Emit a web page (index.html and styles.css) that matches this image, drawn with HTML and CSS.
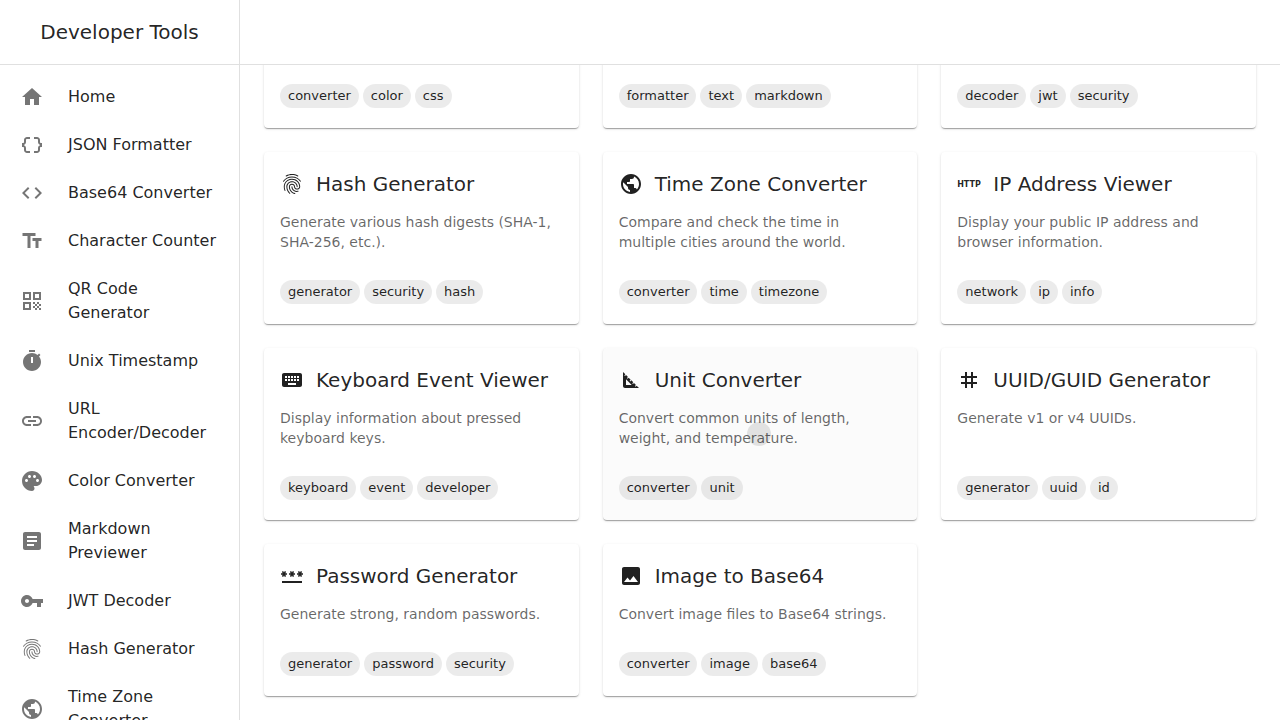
FILE: index.html
```html
<!DOCTYPE html>
<html lang="en">
<head>
<meta charset="utf-8">
<meta name="viewport" content="width=device-width, initial-scale=1">
<title>Developer Tools</title>
<link rel="stylesheet" href="styles.css">
</head>
<body>
<svg class="sprite" aria-hidden="true">
  <symbol id="home" viewBox="0 0 24 24"><path d="M10 20v-6h4v6h5v-8h3L12 3 2 12h3v8z"/></symbol>
  <symbol id="braces" viewBox="0 0 24 24"><path d="M4 7v2c0 .55-.45 1-1 1H2v4h1c.55 0 1 .45 1 1v2c0 1.65 1.35 3 3 3h3v-2H7c-.55 0-1-.45-1-1v-2c0-1.3-.84-2.42-2-2.83v-.34C5.16 11.42 6 10.3 6 9V7c0-.55.45-1 1-1h3V4H7C5.35 4 4 5.35 4 7zm17 3c-.55 0-1-.45-1-1V7c0-1.65-1.35-3-3-3h-3v2h3c.55 0 1 .45 1 1v2c0 1.3.84 2.42 2 2.83v.34c-1.16.41-2 1.52-2 2.83v2c0 .55-.45 1-1 1h-3v2h3c1.65 0 3-1.35 3-3v-2c0-.55.45-1 1-1h1v-4h-1z"/></symbol>
  <symbol id="code" viewBox="0 0 24 24"><path d="M9.4 16.6 4.8 12l4.6-4.6L8 6l-6 6 6 6 1.4-1.4zm5.2 0 4.6-4.6-4.6-4.6L16 6l6 6-6 6-1.4-1.4z"/></symbol>
  <symbol id="text-size" viewBox="0 0 24 24"><path d="M2.5 4v3h5v12h3V7h5V4h-13zm19 5h-9v3h3v7h3v-7h3V9z"/></symbol>
  <symbol id="qr" viewBox="0 0 24 24"><path d="M3 11h8V3H3v8zm2-6h4v4H5V5zM3 21h8v-8H3v8zm2-6h4v4H5v-4zM13 3v8h8V3h-8zm6 6h-4V5h4v4zM19 19h2v2h-2zM13 13h2v2h-2zM15 15h2v2h-2zM13 17h2v2h-2zM15 19h2v2h-2zM17 17h2v2h-2zM17 13h2v2h-2zM19 15h2v2h-2z"/></symbol>
  <symbol id="timer" viewBox="0 0 24 24"><path d="M9 1h6v2H9zm10.03 6.39 1.42-1.42c-.43-.51-.9-.99-1.41-1.41l-1.42 1.42C16.07 4.74 14.12 4 12 4c-4.97 0-9 4.03-9 9s4.02 9 9 9 9-4.03 9-9c0-2.12-.74-4.07-1.97-5.61zM13 14h-2V8h2v6z"/></symbol>
  <symbol id="link" viewBox="0 0 24 24"><path d="M3.9 12c0-1.71 1.39-3.1 3.1-3.1h4V7H7c-2.76 0-5 2.24-5 5s2.24 5 5 5h4v-1.9H7c-1.71 0-3.1-1.39-3.1-3.1zM8 13h8v-2H8v2zm9-6h-4v1.9h4c1.71 0 3.1 1.39 3.1 3.1s-1.39 3.1-3.1 3.1h-4V17h4c2.76 0 5-2.24 5-5s-2.24-5-5-5z"/></symbol>
  <symbol id="palette" viewBox="0 0 24 24"><path d="M12 2C6.49 2 2 6.49 2 12s4.49 10 10 10c1.38 0 2.5-1.12 2.5-2.5 0-.61-.23-1.2-.64-1.67-.08-.1-.13-.21-.13-.33 0-.28.22-.5.5-.5H16c3.31 0 6-2.69 6-6 0-4.96-4.49-9-10-9zm5.5 11c-.83 0-1.5-.67-1.5-1.5s.67-1.5 1.5-1.5 1.5.67 1.5 1.5-.67 1.5-1.5 1.5zm-3-4c-.83 0-1.5-.67-1.5-1.5S13.67 6 14.5 6s1.5.67 1.5 1.5S15.33 9 14.5 9zM5 11.5c0-.83.67-1.5 1.5-1.5s1.5.67 1.5 1.5S7.33 13 6.5 13 5 12.33 5 11.5zm6-4c0 .83-.67 1.5-1.5 1.5S8 8.33 8 7.5 8.67 6 9.5 6s1.5.67 1.5 1.5z"/></symbol>
  <symbol id="article" viewBox="0 0 24 24"><path d="M19 3H5c-1.1 0-2 .9-2 2v14c0 1.1.9 2 2 2h14c1.1 0 2-.9 2-2V5c0-1.1-.9-2-2-2zm-5 14H7v-2h7v2zm3-4H7v-2h10v2zm0-4H7V7h10v2z"/></symbol>
  <symbol id="key" viewBox="0 0 24 24"><path d="M12.65 10C11.83 7.67 9.61 6 7 6c-3.31 0-6 2.69-6 6s2.69 6 6 6c2.61 0 4.83-1.67 5.65-4H17v4h4v-4h2v-4H12.65zM7 14c-1.1 0-2-.9-2-2s.9-2 2-2 2 .9 2 2-.9 2-2 2z"/></symbol>
  <symbol id="fingerprint" viewBox="0 0 24 24"><path d="M17.81 4.47c-.08 0-.16-.02-.23-.06C15.66 3.42 14 3 12.01 3c-1.98 0-3.86.47-5.57 1.41-.24.13-.54.04-.68-.2-.13-.24-.04-.55.2-.68C7.82 2.52 9.86 2 12.01 2c2.13 0 3.99.47 6.03 1.52.25.13.34.43.21.67-.09.18-.26.28-.44.28zM3.5 9.72c-.1 0-.2-.03-.29-.09-.23-.16-.28-.47-.12-.7.99-1.4 2.25-2.5 3.75-3.27C9.98 4.04 14 4.03 17.15 5.65c1.5.77 2.76 1.86 3.75 3.25.16.22.11.54-.12.7-.23.16-.54.11-.7-.12-.9-1.26-2.04-2.25-3.39-2.94-2.87-1.47-6.54-1.47-9.4.01-1.36.7-2.5 1.7-3.4 2.96-.08.14-.23.21-.39.21zm6.25 12.07c-.13 0-.26-.05-.35-.15-.87-.87-1.34-1.43-2.01-2.64-.69-1.23-1.05-2.73-1.05-4.34 0-2.97 2.54-5.39 5.66-5.39s5.66 2.42 5.66 5.39c0 .28-.22.5-.5.5s-.5-.22-.5-.5c0-2.42-2.09-4.39-4.66-4.39-2.57 0-4.66 1.97-4.66 4.39 0 1.44.32 2.77.93 3.85.64 1.15 1.08 1.64 1.85 2.42.19.2.19.51 0 .71-.11.1-.24.15-.37.15zm7.17-1.85c-1.19 0-2.24-.3-3.1-.89-1.49-1.01-2.38-2.65-2.38-4.39 0-.28.22-.5.5-.5s.5.22.5.5c0 1.41.72 2.74 1.94 3.56.71.48 1.54.71 2.54.71.24 0 .64-.03 1.04-.1.27-.05.53.13.58.41.05.27-.13.53-.41.58-.57.11-1.07.12-1.21.12zM14.91 22c-.04 0-.09-.01-.13-.02-1.59-.44-2.63-1.03-3.72-2.1-1.4-1.39-2.17-3.24-2.17-5.22 0-1.62 1.38-2.94 3.08-2.94 1.7 0 3.08 1.32 3.08 2.94 0 1.07.93 1.94 2.08 1.94s2.08-.87 2.08-1.94c0-3.77-3.25-6.83-7.25-6.83-2.84 0-5.44 1.58-6.61 4.03-.39.81-.59 1.76-.59 2.8 0 .78.07 2.01.67 3.61.1.26-.03.55-.29.64-.26.1-.55-.04-.64-.29-.49-1.31-.73-2.61-.73-3.96 0-1.2.23-2.29.68-3.24 1.33-2.79 4.28-4.6 7.51-4.6 4.55 0 8.25 3.51 8.25 7.83 0 1.62-1.38 2.94-3.08 2.94s-3.08-1.32-3.08-2.94c0-1.07-.93-1.94-2.08-1.94s-2.08.87-2.08 1.94c0 1.71.66 3.31 1.87 4.51.95.94 1.86 1.46 3.27 1.85.27.07.42.35.35.61-.05.23-.26.38-.47.38z"/></symbol>
  <symbol id="globe" viewBox="0 0 24 24"><path d="M12 2C6.48 2 2 6.48 2 12s4.48 10 10 10 10-4.48 10-10S17.52 2 12 2zm-1 17.93c-3.95-.49-7-3.85-7-7.93 0-.62.08-1.21.21-1.79L9 15v1c0 1.1.9 2 2 2v1.93zm6.9-2.54c-.26-.81-1-1.39-1.9-1.39h-1v-3c0-.55-.45-1-1-1H8v-2h2c.55 0 1-.45 1-1V7h2c1.1 0 2-.9 2-2v-.41c2.93 1.19 5 4.06 5 7.41 0 2.08-.8 3.97-2.1 5.39z"/></symbol>
  <symbol id="keyboard" viewBox="0 0 24 24"><path d="M20 5H4c-1.1 0-1.99.9-1.99 2L2 17c0 1.1.9 2 2 2h16c1.1 0 2-.9 2-2V7c0-1.1-.9-2-2-2zm-9 3h2v2h-2V8zm0 3h2v2h-2v-2zM8 8h2v2H8V8zm0 3h2v2H8v-2zm-1 2H5v-2h2v2zm0-3H5V8h2v2zm9 7H8v-2h8v2zm0-4h-2v-2h2v2zm0-3h-2V8h2v2zm3 3h-2v-2h2v2zm0-3h-2V8h2v2z"/></symbol>
  <symbol id="set-square" viewBox="0 0 24 24"><path d="M17.66 17.66l-1.06 1.06-.71-.71 1.06-1.06-1.94-1.94-1.06 1.06-.71-.71 1.06-1.06-1.94-1.94-1.06 1.06-.71-.71 1.06-1.06L9.7 9.7l-1.06 1.06-.71-.71 1.06-1.06-1.94-1.94-1.06 1.06-.71-.71 1.06-1.06L4 4v14c0 1.1.9 2 2 2h14l-2.34-2.34zM7 17v-5.76L12.76 17H7z"/></symbol>
  <symbol id="hash" viewBox="0 0 24 24"><path d="M20 10V8h-4V4h-2v4h-4V4H8v4H4v2h4v4H4v2h4v4h2v-4h4v4h2v-4h4v-2h-4v-4h4zm-6 4h-4v-4h4v4z"/></symbol>
  <symbol id="password" viewBox="0 0 24 24"><path d="M2 17h20v2H2v-2zm1.15-4.05L4 11.47l.85 1.48 1.3-.75-.85-1.48H7v-1.5H5.3l.85-1.47L4.85 7 4 8.47 3.15 7l-1.3.75.85 1.47H1v1.5h1.7l-.85 1.48 1.3.75zm6.7-.75 1.3.75.85-1.48.85 1.48 1.3-.75-.85-1.48H15v-1.5h-1.7l.85-1.47-1.3-.75L12 8.47 11.15 7l-1.3.75.85 1.47H9v1.5h1.7l-.85 1.48zM23 9.22h-1.7l.85-1.47-1.3-.75L20 8.47 19.15 7l-1.3.75.85 1.47H17v1.5h1.7l-.85 1.48 1.3.75.85-1.48.85 1.48 1.3-.75-.85-1.48H23v-1.5z"/></symbol>
  <symbol id="image" viewBox="0 0 24 24"><path d="M21 19V5c0-1.1-.9-2-2-2H5c-1.1 0-2 .9-2 2v14c0 1.1.9 2 2 2h14c1.1 0 2-.9 2-2zM8.5 13.5l2.5 3.01L14.5 12l4.5 6H5l3.5-4.5z"/></symbol>
</svg>

<div class="app">
  <aside class="sidebar">
    <div class="brand"><h1 class="brand-title">Developer Tools</h1></div>
    <nav class="nav">
      <a class="nav-item" href="#"><svg class="icon"><use href="#home"/></svg><span>Home</span></a>
      <a class="nav-item" href="#"><svg class="icon"><use href="#braces"/></svg><span>JSON Formatter</span></a>
      <a class="nav-item" href="#"><svg class="icon"><use href="#code"/></svg><span>Base64 Converter</span></a>
      <a class="nav-item" href="#"><svg class="icon"><use href="#text-size"/></svg><span>Character Counter</span></a>
      <a class="nav-item" href="#"><svg class="icon"><use href="#qr"/></svg><span>QR Code Generator</span></a>
      <a class="nav-item" href="#"><svg class="icon"><use href="#timer"/></svg><span>Unix Timestamp</span></a>
      <a class="nav-item" href="#"><svg class="icon"><use href="#link"/></svg><span>URL Encoder/Decoder</span></a>
      <a class="nav-item" href="#"><svg class="icon"><use href="#palette"/></svg><span>Color Converter</span></a>
      <a class="nav-item" href="#"><svg class="icon"><use href="#article"/></svg><span>Markdown Previewer</span></a>
      <a class="nav-item" href="#"><svg class="icon"><use href="#key"/></svg><span>JWT Decoder</span></a>
      <a class="nav-item" href="#"><svg class="icon"><use href="#fingerprint"/></svg><span>Hash Generator</span></a>
      <a class="nav-item" href="#"><svg class="icon"><use href="#globe"/></svg><span>Time Zone Converter</span></a>
    </nav>
  </aside>

  <div class="page">
    <header class="topbar"></header>
    <main class="content">
      <div class="grid">
        <a class="card card-tall" href="#">
          <span class="tags"><span class="tag">converter</span><span class="tag">color</span><span class="tag">css</span></span>
        </a>
        <a class="card card-tall" href="#">
          <span class="tags"><span class="tag">formatter</span><span class="tag">text</span><span class="tag">markdown</span></span>
        </a>
        <a class="card card-tall" href="#">
          <span class="tags"><span class="tag">decoder</span><span class="tag">jwt</span><span class="tag">security</span></span>
        </a>

        <a class="card" href="#">
          <h2 class="card-title"><svg class="icon"><use href="#fingerprint"/></svg>Hash Generator</h2>
          <p class="card-text">Generate various hash digests (SHA-1, SHA-256, etc.).</p>
          <span class="tags"><span class="tag">generator</span><span class="tag">security</span><span class="tag">hash</span></span>
        </a>
        <a class="card" href="#">
          <h2 class="card-title"><svg class="icon"><use href="#globe"/></svg>Time Zone Converter</h2>
          <p class="card-text">Compare and check the time in multiple cities around the world.</p>
          <span class="tags"><span class="tag">converter</span><span class="tag">time</span><span class="tag">timezone</span></span>
        </a>
        <a class="card" href="#">
          <h2 class="card-title"><svg class="icon" viewBox="0 0 24 24"><text class="icon-text" x="12" y="15">HTTP</text></svg>IP Address Viewer</h2>
          <p class="card-text">Display your public IP address and browser information.</p>
          <span class="tags"><span class="tag">network</span><span class="tag">ip</span><span class="tag">info</span></span>
        </a>

        <a class="card" href="#">
          <h2 class="card-title"><svg class="icon"><use href="#keyboard"/></svg>Keyboard Event Viewer</h2>
          <p class="card-text">Display information about pressed keyboard keys.</p>
          <span class="tags"><span class="tag">keyboard</span><span class="tag">event</span><span class="tag">developer</span></span>
        </a>
        <a class="card card-active" href="#">
          <h2 class="card-title"><svg class="icon"><use href="#set-square"/></svg>Unit Converter</h2>
          <p class="card-text">Convert common units of length, weight, and temperature.</p>
          <span class="tags"><span class="tag">converter</span><span class="tag">unit</span></span>
          <span class="ripple"></span>
        </a>
        <a class="card" href="#">
          <h2 class="card-title"><svg class="icon"><use href="#hash"/></svg>UUID/GUID Generator</h2>
          <p class="card-text">Generate v1 or v4 UUIDs.</p>
          <span class="tags"><span class="tag">generator</span><span class="tag">uuid</span><span class="tag">id</span></span>
        </a>

        <a class="card" href="#">
          <h2 class="card-title"><svg class="icon"><use href="#password"/></svg>Password Generator</h2>
          <p class="card-text">Generate strong, random passwords.</p>
          <span class="tags"><span class="tag">generator</span><span class="tag">password</span><span class="tag">security</span></span>
        </a>
        <a class="card" href="#">
          <h2 class="card-title"><svg class="icon"><use href="#image"/></svg>Image to Base64</h2>
          <p class="card-text">Convert image files to Base64 strings.</p>
          <span class="tags"><span class="tag">converter</span><span class="tag">image</span><span class="tag">base64</span></span>
        </a>
      </div>
    </main>
  </div>
</div>
</body>
</html>
```

FILE: styles.css
```css
*, *::before, *::after {
  box-sizing: border-box;
}

body {
  margin: 0;
  background: #fff;
  color: rgba(0, 0, 0, 0.87);
  font-family: "DejaVu Sans", sans-serif;
  font-size: 16px;
  line-height: 24px;
}

a {
  color: inherit;
  text-decoration: none;
}

.sprite {
  display: none;
}

.icon {
  flex: none;
  width: 24px;
  height: 24px;
  fill: currentColor;
}

.icon-text {
  font-family: "DejaVu Sans", sans-serif;
  font-size: 8px;
  font-weight: 700;
  text-anchor: middle;
}

.app {
  display: flex;
  height: 100vh;
  overflow: hidden;
}

/* Sidebar */
.sidebar {
  flex: none;
  width: 240px;
  overflow: hidden;
  border-right: 1px solid #e0e0e0;
}

.brand {
  display: flex;
  align-items: center;
  justify-content: center;
  height: 65px;
  border-bottom: 1px solid #e0e0e0;
}

.brand-title {
  margin: 0;
  font-size: 20px;
  font-weight: 400;
  line-height: 32px;
}

.nav {
  padding: 8px 0;
}

.nav-item {
  display: flex;
  align-items: center;
  gap: 24px;
  padding: 12px 20px;
}

.nav-item .icon {
  color: rgba(0, 0, 0, 0.54);
}

/* Page */
.page {
  display: flex;
  flex: 1;
  flex-direction: column;
  min-width: 0;
}

.topbar {
  flex: none;
  height: 65px;
  border-bottom: 1px solid #e0e0e0;
}

.content {
  display: flex;
  flex: 1;
  flex-direction: column;
  justify-content: flex-end;
  min-height: 0;
  padding: 24px;
  overflow: hidden;
}

.grid {
  display: grid;
  grid-template-columns: repeat(3, minmax(0, 1fr));
  gap: 24px;
}

.card {
  position: relative;
  display: flex;
  flex-direction: column;
  padding: 16px 16px 20px;
  overflow: hidden;
  background: #fff;
  border-radius: 4px;
  box-shadow: 0 2px 1px -1px rgba(0, 0, 0, 0.2), 0 1px 1px rgba(0, 0, 0, 0.14), 0 1px 3px rgba(0, 0, 0, 0.12);
}

.card-tall {
  min-height: 172px;
}

.card-active::after {
  position: absolute;
  inset: 0;
  background: rgba(0, 0, 0, 0.016);
  content: "";
}

.ripple {
  position: absolute;
  top: 74px;
  left: 144px;
  width: 24px;
  height: 24px;
  background: rgba(0, 0, 0, 0.1);
  border-radius: 50%;
}

.card-title {
  display: flex;
  align-items: center;
  gap: 12px;
  margin: 0 0 12px;
  font-size: 20px;
  font-weight: 400;
  line-height: 32px;
}

.card-text {
  margin: 0 0 28px;
  padding-right: 4px;
  color: rgba(0, 0, 0, 0.6);
  font-size: 14px;
  line-height: 20px;
}

.tags {
  display: flex;
  flex-wrap: wrap;
  gap: 4px;
  margin-top: auto;
}

.tag {
  padding: 0 8px;
  background: rgba(0, 0, 0, 0.08);
  border-radius: 12px;
  font-size: 13px;
  line-height: 24px;
}
```
